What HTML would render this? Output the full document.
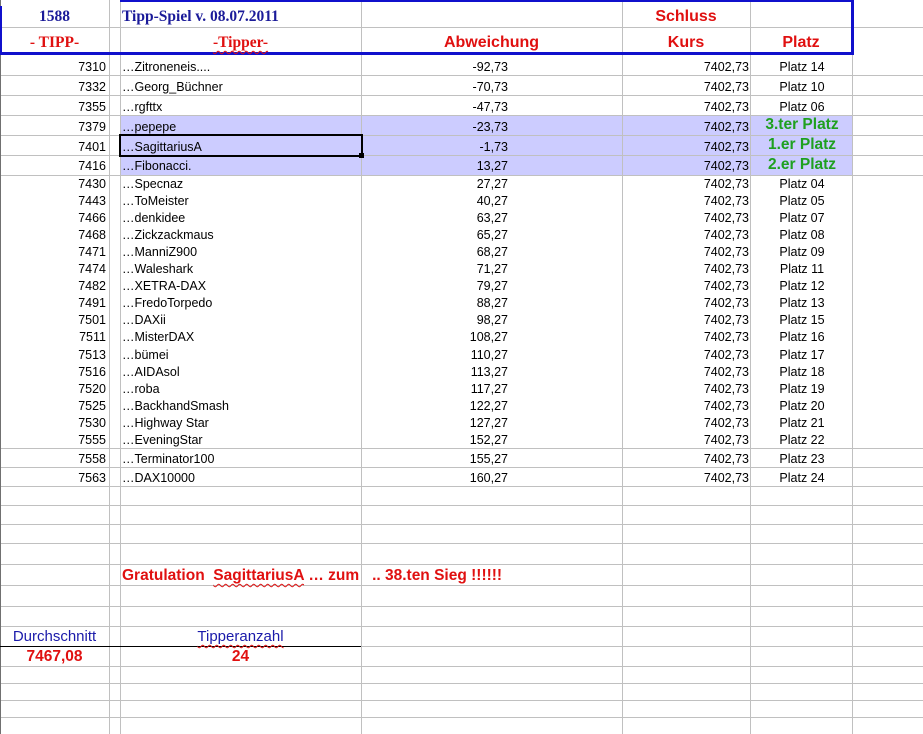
<!DOCTYPE html>
<html><head><meta charset="utf-8"><style>
body{margin:0;width:923px;height:734px;position:relative;overflow:hidden;background:#fff;font-family:"Liberation Sans",Arial,sans-serif}
.h{position:absolute;left:0;width:923px;height:1px;background:#c0c0c0}
.v{position:absolute;top:0;width:1px;height:734px;background:#c0c0c0}
.t{position:absolute;white-space:nowrap;line-height:16px;font-size:12.5px;color:#000}
.a{right:817px}.n{left:122px}.d{right:415px}.k{right:174px}.p{left:752px;width:100px;text-align:center}
.g{color:#1fa01f;font-weight:bold;font-size:15.5px}
.rd{color:#e01010;font-weight:bold}
.bl{color:#1a1a99}
.ser{font-family:"Liberation Serif","Times New Roman",serif;font-weight:bold;font-size:15.5px}
.wv{text-decoration:underline wavy #e01010;text-decoration-thickness:1px;text-underline-offset:3px}
</style></head><body>
<div style="position:absolute;left:120px;top:115px;width:732px;height:60px;background:#ccccff"></div>
<div class="h" style="top:27px"></div>
<div class="h" style="top:75px"></div><div class="h" style="top:95px"></div><div class="h" style="top:115px"></div><div class="h" style="top:135px"></div><div class="h" style="top:155px"></div><div class="h" style="top:175px"></div>
<div class="h" style="top:448px"></div><div class="h" style="top:467px"></div><div class="h" style="top:486px"></div><div class="h" style="top:505px"></div><div class="h" style="top:524px"></div><div class="h" style="top:543px"></div><div class="h" style="top:564px"></div><div class="h" style="top:585px"></div><div class="h" style="top:606px"></div><div class="h" style="top:626px"></div><div class="h" style="top:646px"></div><div class="h" style="top:666px"></div><div class="h" style="top:683px"></div><div class="h" style="top:700px"></div><div class="h" style="top:717px"></div>
<div class="v" style="left:0;background:#707070"></div>
<div class="v" style="left:109px"></div><div class="v" style="left:120px"></div><div class="v" style="left:361px"></div><div class="v" style="left:622px"></div><div class="v" style="left:750px"></div><div class="v" style="left:852px"></div>
<div style="position:absolute;left:120px;top:0;width:733px;height:2px;background:#1010cc"></div>
<div style="position:absolute;left:0;top:52px;width:853px;height:3px;background:#1010cc"></div>
<div style="position:absolute;left:851px;top:0;width:3px;height:55px;background:#1010cc"></div>
<div style="position:absolute;left:0;top:6px;width:2px;height:49px;background:#1010cc"></div>
<div style="position:absolute;left:0;top:646px;width:361px;height:1px;background:#000"></div>
<div style="position:absolute;left:119px;top:134px;width:240px;height:19px;border:2px solid #000"></div>
<div style="position:absolute;left:359px;top:153px;width:5px;height:5px;background:#000"></div>
<div class="t ser bl" style="left:0;width:109px;text-align:center;top:9px">1588</div>
<div class="t ser bl" style="left:122px;top:9px">Tipp-Spiel v. 08.07.2011</div>
<div class="t ser rd" style="left:0;width:109px;text-align:center;top:35px;font-weight:bold">- TIPP-</div>
<div class="t ser rd" style="left:120px;width:241px;text-align:center;top:35px"><span class="wv">-Tipper-</span></div>
<div class="t rd" style="left:361px;width:261px;text-align:center;top:35px;font-size:16px">Abweichung</div>
<div class="t rd" style="left:622px;width:128px;text-align:center;top:9px;font-size:16px">Schluss</div>
<div class="t rd" style="left:622px;width:128px;text-align:center;top:35px;font-size:16px">Kurs</div>
<div class="t rd" style="left:750px;width:102px;text-align:center;top:35px;font-size:16px">Platz</div>
<div class="t a" style="top:59px">7310</div><div class="t n" style="top:59px">…Zitroneneis....</div><div class="t d" style="top:59px">-92,73</div><div class="t k" style="top:59px">7402,73</div><div class="t p" style="top:59px">Platz 14</div>
<div class="t a" style="top:79px">7332</div><div class="t n" style="top:79px">…Georg_Büchner</div><div class="t d" style="top:79px">-70,73</div><div class="t k" style="top:79px">7402,73</div><div class="t p" style="top:79px">Platz 10</div>
<div class="t a" style="top:99px">7355</div><div class="t n" style="top:99px">…rgfttx</div><div class="t d" style="top:99px">-47,73</div><div class="t k" style="top:99px">7402,73</div><div class="t p" style="top:99px">Platz 06</div>
<div class="t a" style="top:119px">7379</div><div class="t n" style="top:119px">…pepepe</div><div class="t d" style="top:119px">-23,73</div><div class="t k" style="top:119px">7402,73</div><div class="t p g" style="top:117px">3.ter Platz</div>
<div class="t a" style="top:139px">7401</div><div class="t n" style="top:139px">…SagittariusA</div><div class="t d" style="top:139px">-1,73</div><div class="t k" style="top:139px">7402,73</div><div class="t p g" style="top:137px">1.er Platz</div>
<div class="t a" style="top:158px">7416</div><div class="t n" style="top:158px">…Fibonacci.</div><div class="t d" style="top:158px">13,27</div><div class="t k" style="top:158px">7402,73</div><div class="t p g" style="top:157px">2.er Platz</div>
<div class="t a" style="top:176px">7430</div><div class="t n" style="top:176px">…Specnaz</div><div class="t d" style="top:176px">27,27</div><div class="t k" style="top:176px">7402,73</div><div class="t p" style="top:176px">Platz 04</div>
<div class="t a" style="top:193px">7443</div><div class="t n" style="top:193px">…ToMeister</div><div class="t d" style="top:193px">40,27</div><div class="t k" style="top:193px">7402,73</div><div class="t p" style="top:193px">Platz 05</div>
<div class="t a" style="top:210px">7466</div><div class="t n" style="top:210px">…denkidee</div><div class="t d" style="top:210px">63,27</div><div class="t k" style="top:210px">7402,73</div><div class="t p" style="top:210px">Platz 07</div>
<div class="t a" style="top:227px">7468</div><div class="t n" style="top:227px">…Zickzackmaus</div><div class="t d" style="top:227px">65,27</div><div class="t k" style="top:227px">7402,73</div><div class="t p" style="top:227px">Platz 08</div>
<div class="t a" style="top:244px">7471</div><div class="t n" style="top:244px">…ManniZ900</div><div class="t d" style="top:244px">68,27</div><div class="t k" style="top:244px">7402,73</div><div class="t p" style="top:244px">Platz 09</div>
<div class="t a" style="top:261px">7474</div><div class="t n" style="top:261px">…Waleshark</div><div class="t d" style="top:261px">71,27</div><div class="t k" style="top:261px">7402,73</div><div class="t p" style="top:261px">Platz 11</div>
<div class="t a" style="top:278px">7482</div><div class="t n" style="top:278px">…XETRA-DAX</div><div class="t d" style="top:278px">79,27</div><div class="t k" style="top:278px">7402,73</div><div class="t p" style="top:278px">Platz 12</div>
<div class="t a" style="top:295px">7491</div><div class="t n" style="top:295px">…FredoTorpedo</div><div class="t d" style="top:295px">88,27</div><div class="t k" style="top:295px">7402,73</div><div class="t p" style="top:295px">Platz 13</div>
<div class="t a" style="top:312px">7501</div><div class="t n" style="top:312px">…DAXii</div><div class="t d" style="top:312px">98,27</div><div class="t k" style="top:312px">7402,73</div><div class="t p" style="top:312px">Platz 15</div>
<div class="t a" style="top:329px">7511</div><div class="t n" style="top:329px">…MisterDAX</div><div class="t d" style="top:329px">108,27</div><div class="t k" style="top:329px">7402,73</div><div class="t p" style="top:329px">Platz 16</div>
<div class="t a" style="top:347px">7513</div><div class="t n" style="top:347px">…bümei</div><div class="t d" style="top:347px">110,27</div><div class="t k" style="top:347px">7402,73</div><div class="t p" style="top:347px">Platz 17</div>
<div class="t a" style="top:364px">7516</div><div class="t n" style="top:364px">…AIDAsol</div><div class="t d" style="top:364px">113,27</div><div class="t k" style="top:364px">7402,73</div><div class="t p" style="top:364px">Platz 18</div>
<div class="t a" style="top:381px">7520</div><div class="t n" style="top:381px">…roba</div><div class="t d" style="top:381px">117,27</div><div class="t k" style="top:381px">7402,73</div><div class="t p" style="top:381px">Platz 19</div>
<div class="t a" style="top:398px">7525</div><div class="t n" style="top:398px">…BackhandSmash</div><div class="t d" style="top:398px">122,27</div><div class="t k" style="top:398px">7402,73</div><div class="t p" style="top:398px">Platz 20</div>
<div class="t a" style="top:415px">7530</div><div class="t n" style="top:415px">…Highway Star</div><div class="t d" style="top:415px">127,27</div><div class="t k" style="top:415px">7402,73</div><div class="t p" style="top:415px">Platz 21</div>
<div class="t a" style="top:432px">7555</div><div class="t n" style="top:432px">…EveningStar</div><div class="t d" style="top:432px">152,27</div><div class="t k" style="top:432px">7402,73</div><div class="t p" style="top:432px">Platz 22</div>
<div class="t a" style="top:451px">7558</div><div class="t n" style="top:451px">…Terminator100</div><div class="t d" style="top:451px">155,27</div><div class="t k" style="top:451px">7402,73</div><div class="t p" style="top:451px">Platz 23</div>
<div class="t a" style="top:470px">7563</div><div class="t n" style="top:470px">…DAX10000</div><div class="t d" style="top:470px">160,27</div><div class="t k" style="top:470px">7402,73</div><div class="t p" style="top:470px">Platz 24</div>
<div class="t rd" style="left:122px;top:568px;font-size:15.5px">Gratulation&nbsp; <span class="wv">SagittariusA</span> … zum &nbsp; .. 38.ten Sieg !!!!!!</div>
<div class="t bl" style="left:0;width:109px;text-align:center;top:629px;font-size:15px;color:#1a1aaa">Durchschnitt</div>
<div class="t bl" style="left:120px;width:241px;text-align:center;top:629px;font-size:15px;color:#1a1aaa"><span class="wv">Tipperanzahl</span></div>
<div class="t rd" style="left:0;width:109px;text-align:center;top:649px;font-size:15.5px">7467,08</div>
<div class="t rd" style="left:120px;width:241px;text-align:center;top:649px;font-size:15.5px">24</div>
</body></html>
